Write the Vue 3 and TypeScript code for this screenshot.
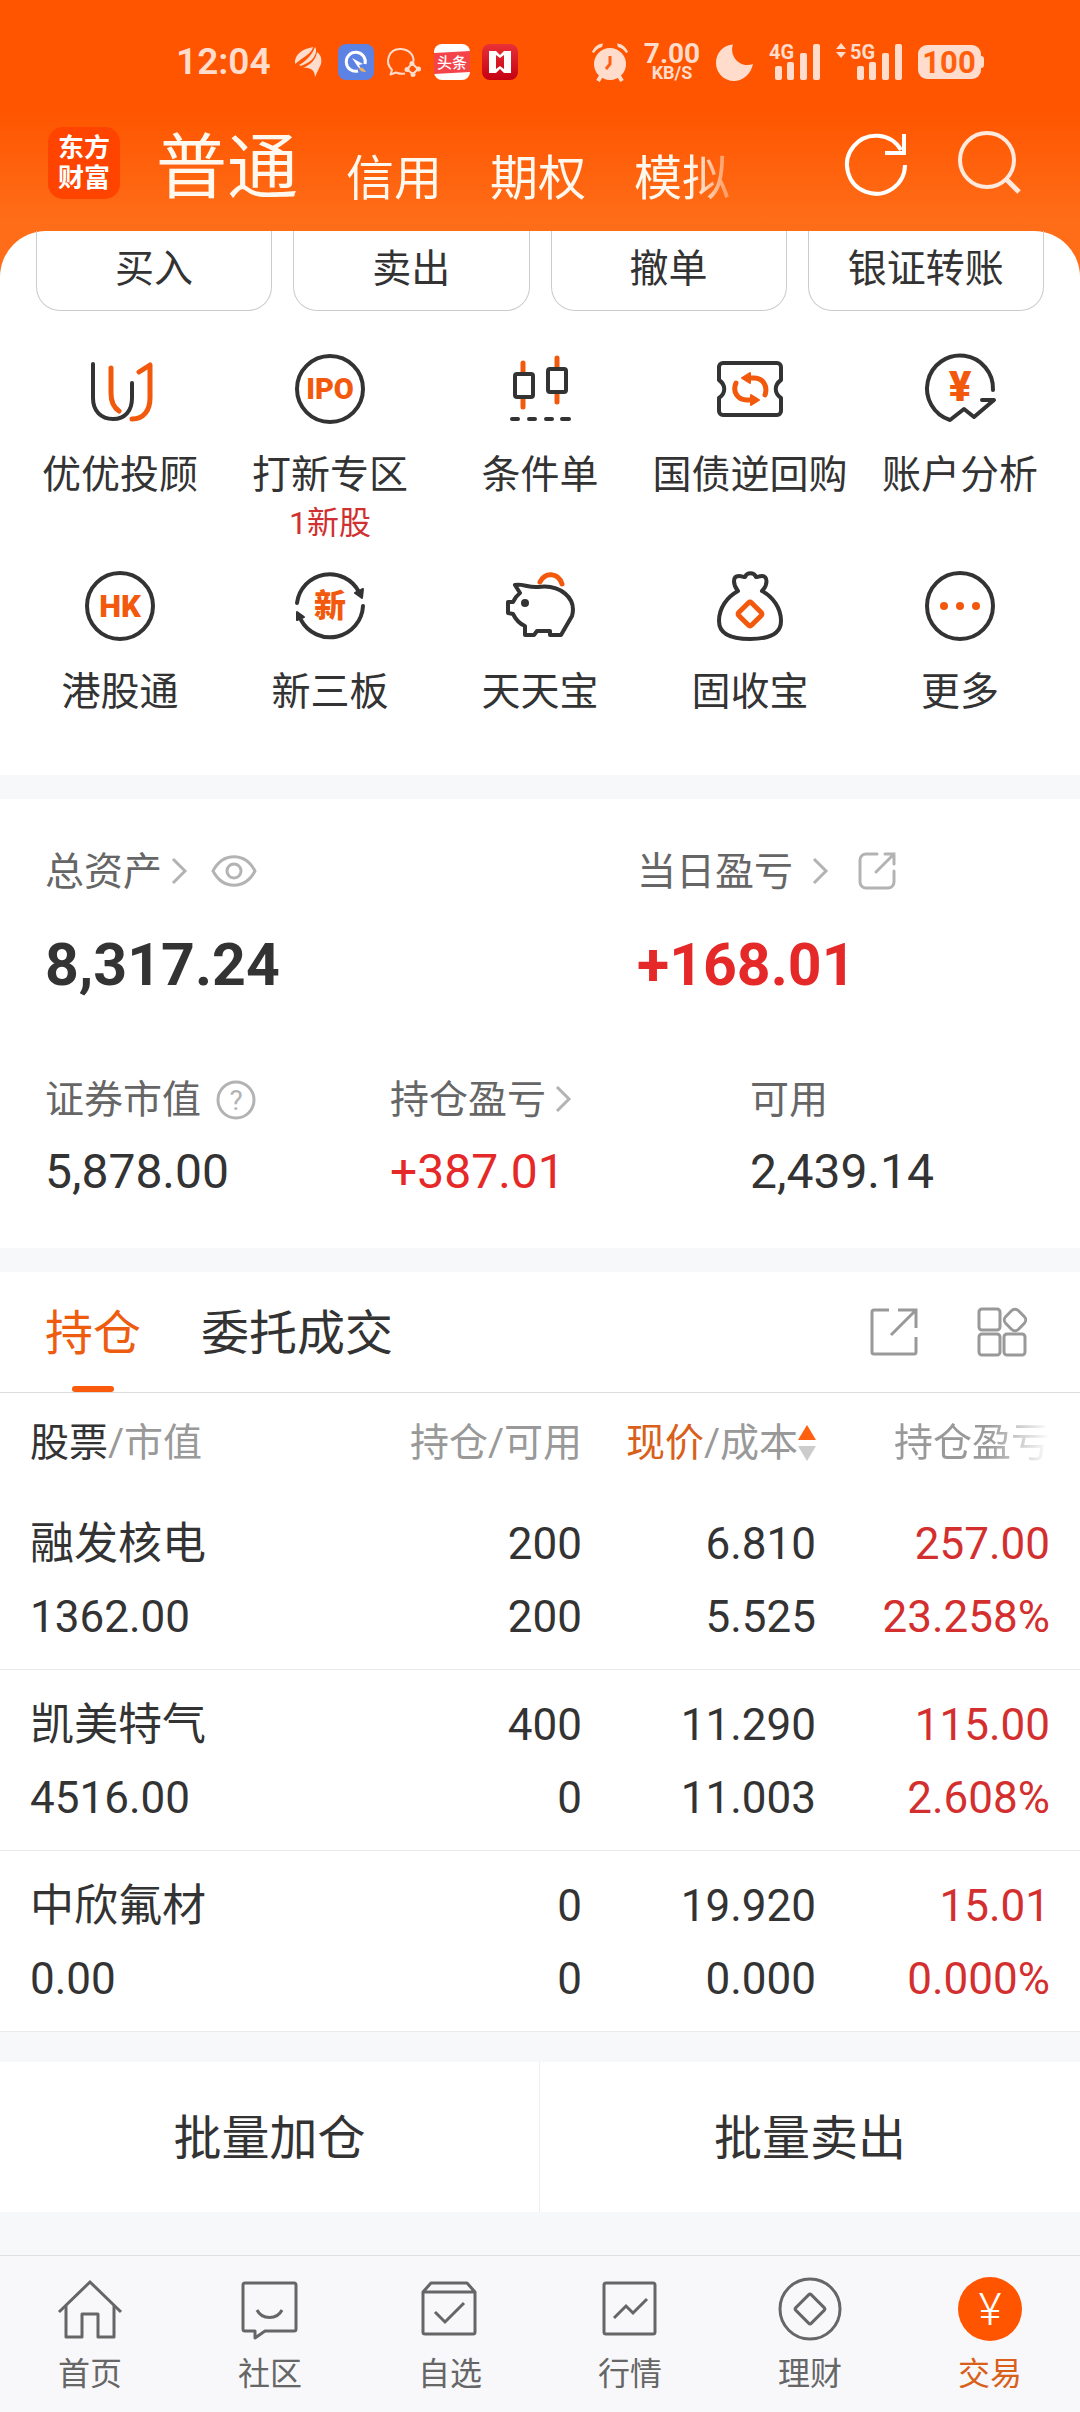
<script setup lang="ts">
import { ref } from 'vue'

interface Feature {
  icon: string
  label: string
  note?: string
}

interface Holding {
  name: string
  value: string
  held: string
  available: string
  price: string
  cost: string
  profit: string
  rate: string
}

const accounts: string[] = ['普通', '信用', '期权', '模拟']
const activeAccount = ref('普通')

const actions: string[] = ['买入', '卖出', '撤单', '银证转账']

const features: Feature[] = [
  { icon: 'advisor', label: '优优投顾' },
  { icon: 'ipo', label: '打新专区', note: '1新股' },
  { icon: 'candles', label: '条件单' },
  { icon: 'repo', label: '国债逆回购' },
  { icon: 'analysis', label: '账户分析' },
  { icon: 'hk', label: '港股通' },
  { icon: 'neeq', label: '新三板' },
  { icon: 'piggy', label: '天天宝' },
  { icon: 'bag', label: '固收宝' },
  { icon: 'more', label: '更多' },
]

const listTabs: string[] = ['持仓', '委托成交']
const activeList = ref('持仓')

const holdings: Holding[] = [
  { name: '融发核电', value: '1362.00', held: '200', available: '200', price: '6.810', cost: '5.525', profit: '257.00', rate: '23.258%' },
  { name: '凯美特气', value: '4516.00', held: '400', available: '0', price: '11.290', cost: '11.003', profit: '115.00', rate: '2.608%' },
  { name: '中欣氟材', value: '0.00', held: '0', available: '0', price: '19.920', cost: '0.000', profit: '15.01', rate: '0.000%' },
]

const batches: string[] = ['批量加仓', '批量卖出']

const navItems: { icon: string; label: string }[] = [
  { icon: 'home', label: '首页' },
  { icon: 'community', label: '社区' },
  { icon: 'watchlist', label: '自选' },
  { icon: 'market', label: '行情' },
  { icon: 'wealth', label: '理财' },
  { icon: 'trade', label: '交易' },
]
const activeNav = ref('trade')
</script>

<template>
  <div class="page">
    <div class="top">
      <div class="status">
        <div class="status-side">
          <span class="time">12:04</span>
          <div class="status-apps">
            <svg width="36" height="36" viewBox="0 0 36 36" fill="#ffdccb" aria-hidden="true">
              <path d="M5 20C4 10 13 5 23 3C22 9 15 12 5 20Z" />
              <path d="M9 21C16 17 22 11 25 3C27 6 26 10 24 13C21 18 15 20 11 22Z" />
              <path d="M13 24C20 21 26 16 27 8C31 11 32 15 31 20L25 33C25 27 21 23 13 24Z" />
            </svg>
            <svg width="36" height="36" viewBox="0 0 36 36" aria-hidden="true">
              <rect width="36" height="36" rx="8" fill="#5c83e4" />
              <path d="M20 27A9.500 9.500 0 1 1 27 20" fill="none" stroke="#fff" stroke-width="3" />
              <path d="M14 14l11 6-4 1 2 4-3-2z" fill="#fff" />
              <path d="M21 24c3-1 5 0 7 4-4 0-6-1-7-4z" fill="#eeb161" />
            </svg>
            <svg width="36" height="36" viewBox="0 0 36 36" fill="none" stroke="#ffdccb" stroke-width="2" stroke-linejoin="round" aria-hidden="true">
              <path d="M19 29.500C15 30 12 29.500 10 28.500L4.500 30.500L6 26C-2 18 3 5 14 5C23 5 28 11 27.500 17.500" />
              <path d="M26 19.500L21 25.500L27 30L32 25Z" />
              <g fill="#ffdccb" stroke="none">
                <circle cx="26" cy="19.500" r="2.500" /><circle cx="21" cy="25.500" r="2.500" />
                <circle cx="27" cy="30.500" r="2.500" /><circle cx="32.500" cy="25" r="2.500" />
              </g>
            </svg>
            <svg width="36" height="36" viewBox="0 0 36 36" aria-hidden="true">
              <rect width="36" height="36" rx="8" fill="#fff" />
              <path d="M0 9L36 7V28L0 30Z" fill="#f5434a" />
              <text x="18" y="24" text-anchor="middle" font-size="15" font-weight="500" fill="#fff">头条</text>
            </svg>
            <svg width="36" height="36" viewBox="0 0 36 36" aria-hidden="true">
              <defs>
                <linearGradient id="redTile" x1="0" y1="0" x2="0" y2="1">
                  <stop offset="0" stop-color="#ea3038" />
                  <stop offset="1" stop-color="#c40011" />
                </linearGradient>
              </defs>
              <rect width="36" height="36" rx="8" fill="url(#redTile)" />
              <path d="M7 7h7l4 4 4-4h7v22h-7l-4-4-4 4H7zM14 11v14l4-3 4 3V11l-4 3z" fill="#fff" fill-rule="evenodd" />
            </svg>
          </div>
        </div>
        <div class="status-side">
          <svg width="36" height="38" viewBox="0 0 36 38" aria-hidden="true">
            <circle cx="18" cy="21" r="16" fill="#ffdccb" />
            <path d="M0 9C2 4 6 1 11 0.500L10 4C6 5 4 7 2 10ZM36 9C34 4 30 1 25 0.500L26 4C30 5 32 7 34 10Z" fill="#ffdccb" />
            <path d="M9 33l-3 5M27 33l3 5" stroke="#ffdccb" stroke-width="4" />
            <path d="M18 13V21L14 26" fill="none" stroke="#ff5f14" stroke-width="3" />
          </svg>
          <div class="speed">
            <span class="speed-value">7.00</span>
            <span class="speed-unit">KB/S</span>
          </div>
          <svg width="37" height="37" viewBox="0 0 37 37" aria-hidden="true">
            <path d="M17 0.500C13 11 23 25 37 20C35 30 27 37 18 37C8 37 0 29 0 19C0 9 7 1 17 0.500Z" fill="#ffdccb" />
          </svg>
          <svg width="51" height="38" viewBox="0 0 51 38" fill="#ffdccb" aria-hidden="true">
            <text x="0" y="16" font-size="20" font-weight="700" fill="#ffdccb">4G</text>
            <rect x="6" y="23" width="7" height="14" rx="2" /><rect x="18" y="19" width="7" height="18" rx="2" />
            <rect x="31" y="10" width="7" height="27" rx="2" /><rect x="44" y="1" width="7" height="36" rx="2" />
          </svg>
          <svg width="66" height="38" viewBox="0 0 66 38" fill="#ffdccb" aria-hidden="true">
            <path d="M5 0L10 6H0ZM5 15L0 9H10Z" />
            <text x="14" y="16" font-size="20" font-weight="700" fill="#ffdccb">5G</text>
            <rect x="21" y="23" width="7" height="14" rx="2" /><rect x="33" y="19" width="7" height="18" rx="2" />
            <rect x="46" y="10" width="7" height="27" rx="2" /><rect x="59" y="1" width="7" height="36" rx="2" />
          </svg>
          <svg width="66" height="34" viewBox="0 0 66 34" fill="#ffdccb" aria-hidden="true">
            <rect width="63" height="34" rx="9" />
            <rect x="60" y="11" width="6" height="12" rx="3" />
            <text x="31" y="28" text-anchor="middle" font-size="31" font-weight="700" fill="#ff5f0c">100</text>
          </svg>
        </div>
      </div>

      <header class="header">
        <a class="logo" href="#"><span>东方</span><span>财富</span></a>
        <nav class="accounts" aria-label="账户">
          <button
            v-for="account in accounts"
            :key="account"
            type="button"
            class="account"
            :class="{ active: account === activeAccount }"
            @click="activeAccount = account"
          >{{ account }}</button>
        </nav>
        <div class="header-tools">
          <button type="button" class="icon-button" aria-label="刷新">
            <svg width="64" height="64" viewBox="0 0 64 64" fill="none" stroke="#fff" stroke-width="4">
              <path d="M61 34A29 29 0 1 1 57 19" />
              <path d="M60 3V22H41" />
            </svg>
          </button>
          <button type="button" class="icon-button" aria-label="搜索">
            <svg width="64" height="64" viewBox="0 0 64 64" fill="none" stroke="#ffe9dc" stroke-width="4">
              <circle cx="30" cy="29" r="27" />
              <path d="M49 48L62 61" stroke-width="5" />
            </svg>
          </button>
        </div>
      </header>

      <section class="sheet">
        <div class="actions">
          <button v-for="action in actions" :key="action" type="button" class="action">{{ action }}</button>
        </div>
        <div class="features">
          <a v-for="feature in features" :key="feature.icon" class="feature" href="#">
            <svg width="72" height="72" viewBox="0 0 72 72" fill="none" stroke="#333" stroke-width="4" stroke-linecap="round" stroke-linejoin="round" aria-hidden="true">
              <template v-if="feature.icon === 'advisor'">
                <path d="M9 11V45C9 58 17 66 29 66C41 66 48 58 48 45V30" />
                <g stroke="#f2590d" stroke-width="5">
                  <path d="M27 15V40C27 48 29 54 35 58" />
                  <path d="M55 19L66 12V45C66 57 60 66 48 66" />
                </g>
              </template>
              <template v-else-if="feature.icon === 'ipo'">
                <circle cx="36" cy="36" r="33" />
                <text class="glyph" x="36" y="46" font-size="29">IPO</text>
              </template>
              <template v-else-if="feature.icon === 'candles'">
                <g stroke="#f2590d" stroke-width="5"><path d="M19 10V54M53 5V49" /></g>
                <rect x="11" y="21" width="18" height="23" rx="2" fill="#fff" />
                <rect x="44" y="16" width="18" height="23" rx="2" fill="#fff" />
                <path d="M8 66H14M25 66H31M42 66H48M58 66H65" />
              </template>
              <template v-else-if="feature.icon === 'repo'">
                <path d="M5 14a4 4 0 0 1 4-4h54a4 4 0 0 1 4 4v13c-7 5-7 13 0 18v13a4 4 0 0 1-4 4H9a4 4 0 0 1-4-4V45c7-5 7-13 0-18z" />
                <g stroke="#f2590d" stroke-width="5">
                  <path d="M36 25H40C49 25 54 33 51 42M22 30C18 39 24 47 33 47H37" />
                  <path d="M28 25L36 20V30ZM45 47L37 42V52Z" fill="#f2590d" stroke-width="2" />
                </g>
              </template>
              <template v-else-if="feature.icon === 'analysis'">
                <path d="M69 37A33 33 0 1 0 26 67L40 56L50 64L70 47H58" />
                <text class="glyph" x="36" y="48" font-size="42">¥</text>
              </template>
              <template v-else-if="feature.icon === 'hk'">
                <circle cx="36" cy="36" r="33" />
                <text class="glyph" x="36" y="47" font-size="31">HK</text>
              </template>
              <template v-else-if="feature.icon === 'neeq'">
                <path d="M3 33A33 33 0 0 1 65 22M69 36A33 33 0 0 1 7 50" />
                <path d="M69 19L61 23L68 28ZM3 42L10 47L3 50Z" fill="#333" stroke-width="2" />
                <text class="glyph" x="36" y="47" font-size="32">新</text>
              </template>
              <template v-else-if="feature.icon === 'piggy'">
                <path d="M36 12C41 2 54 2 58 14" stroke="#f2590d" stroke-width="5" />
                <path d="M16 23L11 15C17 13 25 18 34 17C56 14 73 28 68 46L57 65H46V61H33L30 65H21V56C16 54 12 50 9 44L4 43V32H9C11 28 12 26 16 23Z" />
                <circle cx="21" cy="33" r="4" fill="#333" stroke="none" />
              </template>
              <template v-else-if="feature.icon === 'bag'">
                <path d="M24 21C19 15 18 6 25 6C28 6 29 7 31 7C33 2 40 2 42 7C44 7 45 6 48 6C54 6 54 15 48 21C59 27 67 38 67 51C67 63 56 69 36 69S5 63 5 51C5 38 13 27 24 21Z" />
                <rect x="27" y="35" width="18" height="18" rx="2" transform="rotate(45 36 44)" stroke="#f2590d" stroke-width="5" />
              </template>
              <template v-else>
                <circle cx="36" cy="36" r="33" />
                <g fill="#f2590d" stroke="none">
                  <circle cx="20" cy="36" r="4" /><circle cx="36" cy="36" r="4" /><circle cx="52" cy="36" r="4" />
                </g>
              </template>
            </svg>
            <span class="feature-label">{{ feature.label }}</span>
            <span v-if="feature.note" class="feature-note">{{ feature.note }}</span>
          </a>
        </div>
      </section>
    </div>

    <section class="assets">
      <div class="assets-main">
        <div>
          <div class="caption">
            <span>总资产</span>
            <svg class="chevron near" width="15" height="26" viewBox="0 0 15 26"><path d="M1 1L13 13L1 25" /></svg>
            <button type="button" class="icon-button eye" aria-label="隐藏金额">
              <svg width="46" height="32" viewBox="0 0 46 32" fill="none" stroke="#b3b3b3" stroke-width="3">
                <path d="M2 16C12-3 34-3 44 16C34 35 12 35 2 16Z" stroke-linejoin="round" />
                <circle cx="23" cy="16" r="7" />
              </svg>
            </button>
          </div>
          <p class="total">8,317.24</p>
        </div>
        <div>
          <div class="caption">
            <span>当日盈亏</span>
            <svg class="chevron far" width="15" height="26" viewBox="0 0 15 26"><path d="M1 1L13 13L1 25" /></svg>
            <button type="button" class="icon-button share" aria-label="分享当日盈亏">
              <svg width="38" height="38" viewBox="0 0 38 38" fill="none" stroke="#b3b3b3" stroke-width="3" stroke-linecap="round">
                <path d="M19 2H8A6 6 0 0 0 2 8V30A6 6 0 0 0 8 36H30A6 6 0 0 0 36 30V19" />
                <path d="M27 2H36V12M36 2L18 20" />
              </svg>
            </button>
          </div>
          <p class="total up">+168.01</p>
        </div>
      </div>
      <div class="assets-sub">
        <div>
          <div class="caption">
            <span>证券市值</span>
            <button type="button" class="icon-button help" aria-label="说明">
              <svg width="40" height="40" viewBox="0 0 40 40" fill="none" stroke="#b3b3b3" stroke-width="3">
                <circle cx="20" cy="21" r="18" />
                <text x="20" y="31" text-anchor="middle" font-size="28" fill="#b3b3b3" stroke="none">?</text>
              </svg>
            </button>
          </div>
          <p class="amount">5,878.00</p>
        </div>
        <div>
          <div class="caption">
            <span>持仓盈亏</span>
            <svg class="chevron near" width="15" height="26" viewBox="0 0 15 26"><path d="M1 1L13 13L1 25" /></svg>
          </div>
          <p class="amount up">+387.01</p>
        </div>
        <div>
          <div class="caption"><span>可用</span></div>
          <p class="amount">2,439.14</p>
        </div>
      </div>
    </section>

    <section class="positions">
      <div class="list-bar">
        <div class="list-tabs">
          <button
            v-for="tab in listTabs"
            :key="tab"
            type="button"
            class="list-tab"
            :class="{ active: tab === activeList }"
            @click="activeList = tab"
          >{{ tab }}</button>
        </div>
        <div class="list-tools">
          <button type="button" class="icon-button" aria-label="分享持仓">
            <svg width="50" height="50" viewBox="0 0 50 50" fill="none" stroke="#999" stroke-width="3">
              <path d="M20 3H5A2 2 0 0 0 3 5V45A2 2 0 0 0 5 47H45A2 2 0 0 0 47 45V30" />
              <path d="M29 3H47V21M47 3L22 28" />
            </svg>
          </button>
          <button type="button" class="icon-button" aria-label="更多功能">
            <svg width="50" height="50" viewBox="0 0 50 50" fill="none" stroke="#999" stroke-width="3">
              <rect x="2" y="2" width="21" height="21" rx="3" />
              <rect x="2" y="27" width="21" height="21" rx="3" />
              <rect x="27" y="27" width="21" height="21" rx="3" />
              <rect x="29" y="4" width="18" height="18" rx="5" transform="rotate(45 38 13)" />
            </svg>
          </button>
        </div>
      </div>
      <table class="holdings">
        <thead>
          <tr>
            <th scope="col"><span class="dark">股票</span>/市值</th>
            <th scope="col">持仓/可用</th>
            <th scope="col">
              <button type="button" class="sort">
                <span><span class="orange">现价</span>/成本</span>
                <svg width="18" height="36" viewBox="0 0 18 36" aria-hidden="true">
                  <path d="M9 0L18 15H0Z" fill="#ff6010" />
                  <path d="M9 36L0 21H18Z" fill="#ccc" />
                </svg>
              </button>
            </th>
            <th scope="col"><span class="fading">持仓盈亏</span></th>
          </tr>
        </thead>
        <tbody>
          <tr v-for="row in holdings" :key="row.name">
            <td><span>{{ row.name }}</span><span>{{ row.value }}</span></td>
            <td><span>{{ row.held }}</span><span>{{ row.available }}</span></td>
            <td><span>{{ row.price }}</span><span>{{ row.cost }}</span></td>
            <td class="gain"><span>{{ row.profit }}</span><span>{{ row.rate }}</span></td>
          </tr>
        </tbody>
      </table>
    </section>

    <div class="batches">
      <button v-for="batch in batches" :key="batch" type="button" class="batch">{{ batch }}</button>
    </div>

    <nav class="bottom-nav" aria-label="主导航">
      <a
        v-for="item in navItems"
        :key="item.icon"
        class="nav-item"
        :class="{ active: item.icon === activeNav }"
        href="#"
        @click.prevent="activeNav = item.icon"
      >
        <svg width="64" height="64" viewBox="0 0 64 64" fill="none" stroke="#666" stroke-width="3" aria-hidden="true">
          <template v-if="item.icon === 'home'">
            <path d="M1 35L32 5L63 35" />
            <path d="M8 29V60H24V37H40V60H56V29" stroke-linejoin="round" />
          </template>
          <template v-else-if="item.icon === 'community'">
            <path d="M7 6H56A2 2 0 0 1 58 8V52A2 2 0 0 1 56 54H27L17 61V54H7A2 2 0 0 1 5 52V8A2 2 0 0 1 7 6Z" stroke-linejoin="round" />
            <path d="M19 33C24 43 39 43 44 33" />
          </template>
          <template v-else-if="item.icon === 'watchlist'">
            <path d="M5 15L13 6H49L57 15V55A2 2 0 0 1 55 57H7A2 2 0 0 1 5 55ZM5 15H57" stroke-linejoin="round" />
            <path d="M17 35L27 45L46 26" />
          </template>
          <template v-else-if="item.icon === 'market'">
            <rect x="6" y="6" width="51" height="51" rx="2" />
            <path d="M16 41L28 29L35 36L49 22" />
          </template>
          <template v-else-if="item.icon === 'wealth'">
            <circle cx="32" cy="32" r="30" />
            <rect x="21" y="21" width="22" height="22" rx="2" transform="rotate(45 32 32)" />
          </template>
          <template v-else>
            <circle cx="32" cy="32" r="32" fill="#ff5500" stroke="none" />
            <text x="32" y="48" text-anchor="middle" font-size="44" font-weight="300" fill="#fff" stroke="none">¥</text>
          </template>
        </svg>
        <span>{{ item.label }}</span>
      </a>
    </nav>
  </div>
</template>

<style>
body {
  margin: 0;
  background: #f7f8fa;
}
</style>

<style scoped>
.page {
  display: flex;
  flex-direction: column;
  min-height: 100vh;
  background: #f7f8fa;
  color: #333;
  font-family: Roboto, "Noto Sans CJK SC", sans-serif;
  font-size: 39px;
  line-height: 52px;
}

button {
  padding: 0;
  border: 0;
  background: none;
  color: inherit;
  font: inherit;
  cursor: pointer;
}

a {
  color: inherit;
  text-decoration: none;
}

p {
  margin: 0;
}

svg {
  display: block;
  flex: none;
  overflow: visible;
}

.icon-button {
  display: block;
}

.top {
  background: linear-gradient(#ff5500 0, #ff5500 110px, #ff6d18 220px, #ff6d18 100%);
}

.status {
  display: flex;
  align-items: center;
  justify-content: space-between;
  height: 124px;
  padding: 0 96px 0 176px;
  color: #ffdccb;
}

.status-side {
  display: flex;
  align-items: center;
  gap: 16px;
}

.time {
  width: 98px;
  font-size: 37px;
  font-weight: 600;
}

.status-apps {
  display: flex;
  gap: 12px;
}

.speed {
  display: flex;
  flex-direction: column;
  align-items: center;
  width: 56px;
  font-weight: 700;
}

.speed-value {
  font-size: 28px;
  line-height: 22px;
}

.speed-unit {
  font-size: 18px;
  line-height: 16px;
}

.header {
  display: flex;
  align-items: center;
  height: 78px;
  padding: 0 59px 29px 48px;
}

.logo {
  display: flex;
  flex-direction: column;
  justify-content: center;
  align-items: center;
  width: 72px;
  height: 72px;
  border-radius: 15px;
  background: #ff4400;
  color: #fff;
  font-size: 26px;
  font-weight: 700;
  line-height: 30px;
}

.accounts {
  display: flex;
  align-items: flex-end;
  gap: 48px;
  margin-left: 36px;
  padding: 10px 20px 0 0;
  mask-image: linear-gradient(to right, #000 calc(100% - 60px), transparent);
}

.account {
  color: #fff8ee;
  font-size: 48px;
  line-height: 56px;
  white-space: nowrap;
}

.account.active {
  font-size: 71px;
  line-height: 78px;
}

.header-tools {
  display: flex;
  gap: 49px;
  margin-left: auto;
}

.sheet {
  padding-bottom: 57px;
  border-radius: 46px 46px 0 0;
  background: #fff;
}

.actions {
  display: grid;
  grid-template-columns: repeat(4, 1fr);
  gap: 21px;
  padding: 0 36px;
}

.action {
  height: 80px;
  padding-bottom: 3px;
  border: 1px solid #ccc;
  border-top: 0;
  border-radius: 0 0 24px 24px;
}

.features {
  display: grid;
  grid-template-columns: repeat(5, 1fr);
  row-gap: 24px;
  padding: 42px 15px 0;
}

.feature {
  display: flex;
  flex-direction: column;
  align-items: center;
  white-space: nowrap;
}

.feature-label {
  margin-top: 24px;
}

.feature-note {
  color: #d03030;
  font-size: 32px;
  line-height: 45px;
}

.glyph {
  fill: #f2590d;
  stroke: none;
  font-weight: 900;
  text-anchor: middle;
}

.assets {
  margin-top: 24px;
  padding: 46px 0 46px 45px;
  background: #fff;
}

.assets-main {
  display: grid;
  grid-template-columns: 592fr 443fr;
}

.assets-sub {
  display: grid;
  grid-template-columns: 345fr 360fr 330fr;
  margin-top: 72px;
}

.caption {
  display: flex;
  align-items: center;
  color: #666;
}

.caption span {
  padding-top: 2px;
  line-height: 50px;
}

.chevron {
  fill: none;
  stroke: #b3b3b3;
  stroke-width: 3px;
}

.chevron.near {
  margin-left: 10px;
}

.chevron.far {
  margin-left: 20px;
}

.eye {
  margin-left: 24px;
}

.share {
  margin-left: 30px;
}

.help {
  margin-left: 15px;
}

.total {
  margin-top: 32px;
  font-size: 59px;
  font-weight: 700;
  line-height: 72px;
}

.amount {
  margin-top: 17px;
  font-size: 48px;
  line-height: 60px;
}

.up {
  color: #e52828;
}

.positions {
  margin-top: 24px;
  background: #fff;
}

.list-bar {
  display: flex;
  align-items: center;
  justify-content: space-between;
  height: 120px;
  padding: 0 53px 0 45px;
  border-bottom: 1px solid #ddd;
}

.list-tabs {
  display: flex;
  gap: 60px;
}

.list-tab {
  position: relative;
  padding-top: 4px;
  font-size: 48px;
  line-height: 116px;
}

.list-tab.active {
  color: #ee5c0f;
}

.list-tab.active::after {
  position: absolute;
  bottom: 0;
  left: 50%;
  width: 42px;
  height: 6px;
  margin-left: -21px;
  border-radius: 3px;
  background: #f95a0c;
  content: "";
}

.list-tools {
  display: flex;
  gap: 58px;
}

.holdings {
  width: 100%;
  border-spacing: 0;
  table-layout: fixed;
}

.holdings th {
  height: 92px;
  padding: 4px 0 0;
  color: #999;
  font-weight: 400;
  text-align: right;
  white-space: nowrap;
}

.holdings th:first-child,
.holdings td:first-child {
  padding-left: 30px;
  text-align: left;
}

.holdings th:nth-child(3) {
  width: 234px;
}

.holdings th:last-child {
  width: 234px;
  padding-right: 30px;
}

.holdings td:last-child {
  padding-right: 30px;
}

.holdings td {
  padding: 19px 0 15px;
  border-bottom: 1px solid #eaeaea;
  font-size: 44px;
  line-height: 73px;
  text-align: right;
}

.holdings td span {
  display: block;
}

.holdings .gain {
  color: #d42f2f;
}

.dark {
  color: #333;
}

.orange {
  color: #d9601a;
}

.sort {
  display: inline-flex;
  align-items: center;
  vertical-align: top;
}

.fading {
  mask-image: linear-gradient(to right, #000 60%, transparent);
}

.batches {
  display: grid;
  grid-template-columns: 1fr 1fr;
  margin: 30px 0 43px;
  background: #fff;
}

.batch {
  padding-top: 4px;
  font-size: 48px;
  line-height: 146px;
}

.batch:first-child {
  border-right: 1px solid #eee;
}

.bottom-nav {
  display: grid;
  grid-template-columns: repeat(6, 1fr);
  margin-top: auto;
  padding: 21px 0 16px;
  border-top: 1px solid #e0e0e0;
  background: #f8f8fb;
}

.nav-item {
  display: flex;
  flex-direction: column;
  align-items: center;
  gap: 11px;
  color: #666;
  font-size: 32px;
  line-height: 44px;
}

.nav-item.active {
  color: #d9601a;
}
</style>
